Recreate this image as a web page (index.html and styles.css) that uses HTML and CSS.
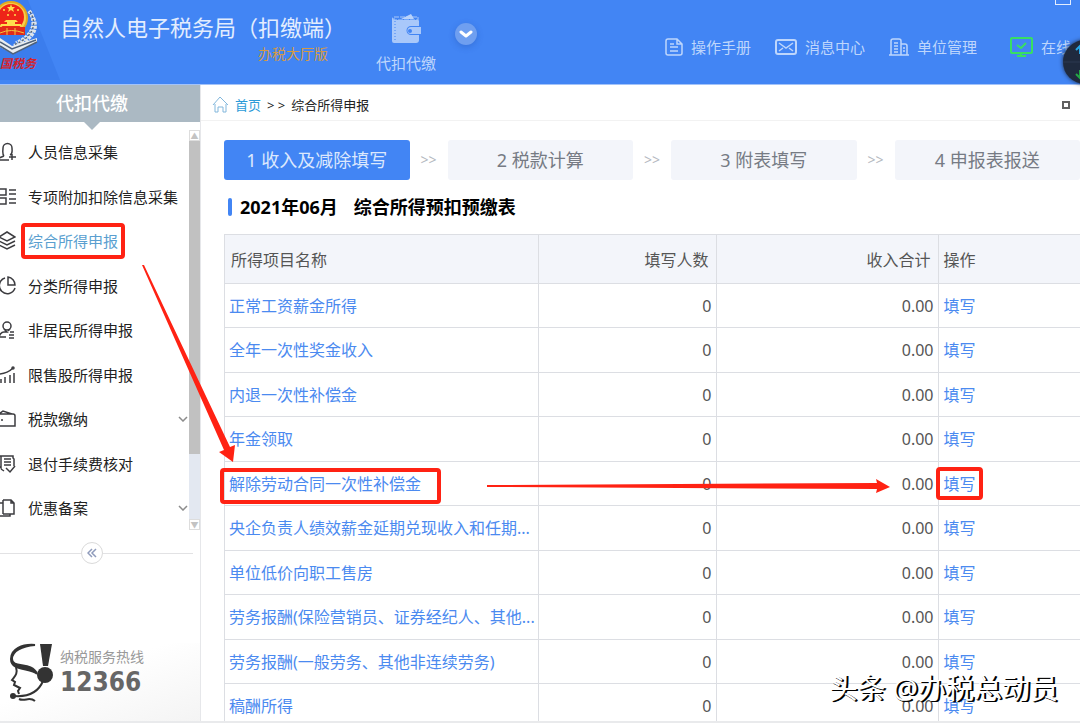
FILE: index.html
```html
<!DOCTYPE html>
<html lang="zh-CN">
<head>
    <meta charset="UTF-8">
    <meta name="viewport" content="width=device-width, initial-scale=1.0">
    <title>自然人电子税务局（扣缴端）</title>
    <link rel="stylesheet" href="styles.css">
</head>
<body>
    <header class="topbar">
        <svg class="emblem" viewBox="0 0 60 84" aria-hidden="true">
            <path d="M0 0H28L60 80H0Z" fill="#3b7ded"/>
            <g fill="none" stroke="#dfe5ea" stroke-width="4" stroke-dasharray="3 1">
                <path d="M29 11C37 20 35 36 16 43"/>
                <path d="M33 18C38 28 34 39 14 46"/>
            </g>
            <path d="M30 12C38 24 33 38 13 45" fill="none" stroke="#53657a" stroke-width="1.5" stroke-dasharray="2 2"/>
            <path d="M0 38L12 46L37 38L37 42L13 54L0 47Z" fill="#e9edf0"/>
            <path d="M0 42L12 49L36 40M0 46L13 54L37 42" fill="none" stroke="#50627a" stroke-width="1.5"/>
            <circle cx="11" cy="18" r="17" fill="#e3a91f"/>
            <circle cx="11" cy="18" r="15" fill="#f7cf4a"/>
            <circle cx="11" cy="17" r="13" fill="#ee2418"/>
            <path d="M11 4l1 3h3l-2 2 1 3-3-2-3 2 1-3-2-2h3z" fill="#ffdf4d"/>
            <g fill="#ffdf4d">
                <circle cx="4" cy="10" r="1"/><circle cx="18" cy="10" r="1"/>
                <circle cx="8" cy="15" r="1"/><circle cx="15" cy="15" r="1"/>
                <path d="M6 20h10l2 2H4zM7 22h8v2H7zM1 24h20v2H1z"/>
            </g>
            <path d="M0 27H25V35H0Z" fill="#e02a1a"/>
            <path d="M0 33Q11 28 24 33M7 28v7M15 28v7" fill="none" stroke="#f3c63a" stroke-width="1"/>
            <text class="emblem-text" x="0" y="68">国税务</text>
        </svg>
        <div class="brand">
            <h1>自然人电子税务局（扣缴端）</h1>
            <span class="edition">办税大厅版</span>
        </div>
        <a class="module" href="#">
            <svg width="30" height="30" viewBox="0 0 30 30" aria-hidden="true">
                <path d="M3 3H27V6H3Z" fill="none" stroke="#a9c8fa" stroke-dasharray="5 1"/>
                <path d="M10 5L20 0L23 5Z" fill="#b9d3fb"/>
                <path d="M1 3L3 6H27a1 1 0 0 1 1 1V12H20a4 4 0 0 0 0 9H28V26a3 3 0 0 1-3 3H3a2 2 0 0 1-2-2Z" fill="#a9c8fa"/>
                <path d="M4 7V27" stroke="#4285f4" stroke-dasharray="1 2"/>
                <path d="M20 13H30V20H20a3 3 0 0 1 0-7Z" fill="#a9c8fa"/>
                <circle cx="19" cy="17" r="2" fill="#4285f4"/>
            </svg>
            <span>代扣代缴</span>
        </a>
        <button class="expand" type="button" aria-label="展开">
            <svg width="14" height="9" viewBox="0 0 14 9"><path d="M2 2L7 6L12 2" fill="none" stroke="#fff" stroke-width="3" stroke-linecap="round" stroke-linejoin="round"/></svg>
        </button>
        <nav class="topnav">
            <a href="#">
                <svg width="18" height="18" viewBox="0 0 18 18"><path d="M3 1H12L17 6V15a2 2 0 0 1-2 2H3a2 2 0 0 1-2-2V3a2 2 0 0 1 2-2ZM12 1V6H17M5 6H9M5 9H13M5 13H13"/></svg>
                操作手册
            </a>
            <a href="#">
                <svg width="22" height="16" viewBox="0 0 22 16"><rect x="1" y="1" width="20" height="14" rx="2"/><path d="M4 4L11 9L18 4M4 12L8 9M18 12L14 9"/></svg>
                消息中心
            </a>
            <a href="#">
                <svg width="20" height="18" viewBox="0 0 20 18"><path d="M0 17H20M2 17V3a2 2 0 0 1 2-2H10a2 2 0 0 1 2 2V17M12 6H16a2 2 0 0 1 2 2V17M5 5H9M5 8H9M5 11H9M5 14H9M14 10H16M14 13H16"/></svg>
                单位管理
            </a>
            <a class="online" href="#">
                <svg width="23" height="20" viewBox="0 0 23 20"><rect x="1" y="1" width="21" height="15" rx="1"/><path d="M7 8L11 11L16 6M11 16V19M7 19H16"/></svg>
                在线
            </a>
        </nav>
        <button class="maximize" type="button" aria-label="最大化"></button>
        <div class="speed" aria-hidden="true">
            <svg width="44" height="44" viewBox="0 0 44 44">
                <path d="M0 22H44" stroke="#2c3850"/>
                <path d="M17 14V7M13 10L17 6L21 10" fill="none" stroke="#27a8e8" stroke-width="2"/>
                <path d="M17 30V37M13 34L17 38L21 34" fill="none" stroke="#23a845" stroke-width="2"/>
            </svg>
        </div>
    </header>

    <div class="layout">
        <aside class="sidebar">
            <h2 class="sidebar-title">代扣代缴</h2>
            <div class="menu-wrap">
                <ul class="menu">
                    <li><a href="#"><svg viewBox="2 0 16 20"><path d="M6 14C4 12 5 9 5 6a4 4 0 0 1 9 0C14 9 15 12 12 13M6 14L1 16V18H11M11 15H18M14 12V18"/></svg>人员信息采集</a></li>
                    <li><a href="#"><svg viewBox="2 0 16 20"><path d="M0 2H8V8H0ZM0 11H8V17H0ZM11 3H18M11 7H18M11 12H18M11 16H18"/></svg>专项附加扣除信息采集</a></li>
                    <li><a class="active" href="#"><svg viewBox="2 0 16 20"><path d="M9 1L17 6L9 10L1 6ZM1 10L9 14L17 10M1 14L9 18L17 14"/></svg>综合所得申报</a></li>
                    <li><a href="#"><svg viewBox="2 0 16 20"><path d="M7 2A8 8 0 1 0 17 12M10 1A8 8 0 0 1 17 9H10Z"/></svg>分类所得申报</a></li>
                    <li><a href="#"><svg viewBox="2 0 16 20"><circle cx="9" cy="6" r="4"/><path d="M6 9L9 12H6C3 12 2 14 1 17H8M12 9L10 11M12 12H16M11 15H16M11 18H16"/></svg>非居民所得申报</a></li>
                    <li><a href="#"><svg viewBox="2 0 16 20"><path d="M0 9C7 9 11 7 15 3M3 18V14M7 18V12M12 18V10M16 18V8"/><circle cx="15" cy="3" r="1"/></svg>限售股所得申报</a></li>
                    <li><a href="#"><svg viewBox="2 0 16 20"><path d="M0 5H15a2 2 0 0 1 2 2V17H0M1 5L5 2L14 5M3 11H5"/></svg>税款缴纳<svg class="caret" viewBox="0 0 10 6"><path d="M1 1L5 5L9 1"/></svg></a></li>
                    <li><a href="#"><svg viewBox="2 0 16 20"><path d="M1 2H15V4L16 5V12M3 2V14L1 12M3 15L6 17M6 5H13M6 8H13M6 11H13M8 14L12 18L17 12"/></svg>退付手续费核对</a></li>
                    <li><a href="#"><svg viewBox="2 0 16 20"><path d="M5 2H13L16 5V16H5M13 2V5H16M5 2V16M5 5H1V18H12V16"/></svg>优惠备案<svg class="caret" viewBox="0 0 10 6"><path d="M1 1L5 5L9 1"/></svg></a></li>
                </ul>
                <div class="scrollbar" aria-hidden="true">
                    <span class="scroll-end">▲</span>
                    <span class="scroll-thumb"></span>
                    <span class="scroll-end">▼</span>
                </div>
            </div>
            <div class="collapse">
                <button type="button" aria-label="收起">
                    <svg width="10" height="10" viewBox="0 0 10 10"><path d="M5 1L1 5L5 9M9 1L5 5L9 9"/></svg>
                </button>
            </div>
            <div class="hotline">
                <svg width="44" height="60" viewBox="0 0 44 60" aria-hidden="true">
                    <path d="M25 2C12 3 2 8 2 16C2 26 22 18 27 31C22 24 1 29 1 16C1 6 12 1 25 2Z" fill="#333" stroke="#333" stroke-width="2"/>
                    <path d="M30 1H42L38 23H33Z" fill="#333"/>
                    <circle cx="35" cy="32" r="8" fill="#333"/>
                    <path d="M33 38C28 50 17 54 4 53" fill="none" stroke="#333" stroke-width="2"/>
                    <circle cx="3" cy="53" r="3" fill="#333"/>
                    <path d="M6 24C8 31 5 33 2 37L5 39L4 42L8 44L10 45L8 48L9 51M9 56C15 59 19 53 25 58" fill="none" stroke="#333" stroke-width="2"/>
                </svg>
                <p>
                    <span class="hotline-label">纳税服务热线</span>
                    <strong>12366</strong>
                </p>
            </div>
        </aside>

        <main class="content">
            <div class="breadcrumb">
                <svg width="17" height="18" viewBox="0 0 17 18" aria-hidden="true"><path d="M1 9L8 1L16 9M3 8V16H6V11H11V16H14V8"/></svg>
                <a href="#">首页</a>
                <span>&gt; &gt;</span>
                <span>综合所得申报</span>
                <button type="button" aria-label="还原"></button>
            </div>

            <ol class="steps">
                <li class="step current">1 收入及减除填写</li>
                <li class="arrow" aria-hidden="true">&gt;&gt;</li>
                <li class="step">2 税款计算</li>
                <li class="arrow" aria-hidden="true">&gt;&gt;</li>
                <li class="step">3 附表填写</li>
                <li class="arrow" aria-hidden="true">&gt;&gt;</li>
                <li class="step">4 申报表报送</li>
            </ol>

            <h3 class="report-title"><span>2021年06月</span><span>综合所得预扣预缴表</span></h3>

            <table class="income">
                <colgroup>
                    <col>
                    <col class="col-count">
                    <col class="col-total">
                    <col class="col-action">
                </colgroup>
                <thead>
                    <tr><th>所得项目名称</th><th class="num">填写人数</th><th class="num">收入合计</th><th>操作</th></tr>
                </thead>
                <tbody>
                    <tr><td><a href="#">正常工资薪金所得</a></td><td class="num">0</td><td class="num">0.00</td><td><a href="#">填写</a></td></tr>
                    <tr><td><a href="#">全年一次性奖金收入</a></td><td class="num">0</td><td class="num">0.00</td><td><a href="#">填写</a></td></tr>
                    <tr><td><a href="#">内退一次性补偿金</a></td><td class="num">0</td><td class="num">0.00</td><td><a href="#">填写</a></td></tr>
                    <tr><td><a href="#">年金领取</a></td><td class="num">0</td><td class="num">0.00</td><td><a href="#">填写</a></td></tr>
                    <tr><td><a href="#">解除劳动合同一次性补偿金</a></td><td class="num">0</td><td class="num">0.00</td><td><a href="#">填写</a></td></tr>
                    <tr><td><a href="#">央企负责人绩效薪金延期兑现收入和任期...</a></td><td class="num">0</td><td class="num">0.00</td><td><a href="#">填写</a></td></tr>
                    <tr><td><a href="#">单位低价向职工售房</a></td><td class="num">0</td><td class="num">0.00</td><td><a href="#">填写</a></td></tr>
                    <tr><td><a href="#">劳务报酬(保险营销员、证券经纪人、其他...</a></td><td class="num">0</td><td class="num">0.00</td><td><a href="#">填写</a></td></tr>
                    <tr><td><a href="#">劳务报酬(一般劳务、其他非连续劳务)</a></td><td class="num">0</td><td class="num">0.00</td><td><a href="#">填写</a></td></tr>
                    <tr><td><a href="#">稿酬所得</a></td><td class="num">0</td><td class="num">0.00</td><td><a href="#">填写</a></td></tr>
                </tbody>
            </table>
        </main>
    </div>

    <!-- guide marks drawn over the page -->
    <svg class="marks" width="1080" height="723" viewBox="0 0 1080 723" aria-hidden="true">
        <g fill="none" stroke="#ff2213" stroke-width="4">
            <rect x="23" y="225" width="100" height="32" rx="2"/>
            <rect x="222" y="470" width="217" height="32" rx="2"/>
            <rect x="938" y="469" width="43" height="29" rx="2"/>
        </g>
        <g fill="#ff2213">
            <path d="M142 265L144 265L230 447L235 445L233 462L219 452L224 450Z"/>
            <path d="M487 485L877 483L876 479L890 487L876 493L877 489L487 487Z"/>
        </g>
    </svg>
    <div class="watermark">头条 @办税总动员</div>
</body>
</html>
```
FILE: styles.css
```css
:root {
    --primary: #4285f4;
    --link: #4b8af0;
    --border: #dcdee3;
    --panel: #f3f5fa;
    --text: #222222;
}

* {
    margin: 0;
    padding: 0;
    box-sizing: border-box;
}

body {
    position: relative;
    display: flex;
    flex-direction: column;
    height: 100vh;
    overflow: hidden;
    background: #ffffff;
    color: var(--text);
    font-family: "Noto Sans", "Noto Sans CJK SC", sans-serif;
    font-size: 15px;
    line-height: 20px;
}

a {
    color: inherit;
    text-decoration: none;
}

button {
    border: none;
    background: none;
    cursor: pointer;
}

ul, ol {
    list-style: none;
}

svg {
    flex: none;
}

/* top bar */
.topbar {
    position: relative;
    display: flex;
    flex: none;
    height: 85px;
    background: var(--primary);
    border-bottom: 1px solid #a3c3f9;
    color: #bed6fc;
}

.emblem {
    width: 60px;
    height: 84px;
}

.emblem-text {
    fill: #d5232b;
    font-size: 12px;
    font-style: italic;
    font-weight: 700;
}

.brand {
    display: flex;
    flex-direction: column;
    padding-top: 13px;
}

.brand h1 {
    color: #e3edfe;
    font-size: 22px;
    font-weight: 400;
    line-height: 28px;
}

.edition {
    align-self: flex-end;
    margin-right: 18px;
    color: #d59a45;
    font-size: 14px;
    line-height: 26px;
}

.module {
    display: flex;
    flex-direction: column;
    align-items: center;
    gap: 9px;
    padding-top: 14px;
    margin-left: 30px;
}

.expand {
    display: grid;
    place-items: center;
    width: 22px;
    height: 22px;
    margin: 23px 0 0 19px;
    border-radius: 50%;
    background: #6f9ff0;
    box-shadow: 0 2px 6px rgba(30, 70, 160, 0.3);
}

.topnav {
    display: flex;
    align-items: center;
    gap: 24px;
    height: 40px;
    margin: 27px 9px 0 auto;
}

.topnav a {
    display: flex;
    align-items: center;
    gap: 8px;
}

.topnav svg {
    fill: none;
    stroke: #bed6fc;
    stroke-width: 2;
}

.topnav path {
    stroke-width: 1.5;
}

.topnav .online {
    margin-left: 9px;
}

.topnav .online svg,
.topnav .online path {
    stroke: #38df62;
    stroke-width: 2;
}

.maximize {
    position: absolute;
    top: -10px;
    right: 9px;
    width: 16px;
    height: 15px;
    border: 1px solid #e3edfe;
}

.speed {
    position: absolute;
    top: 40px;
    right: -27px;
    width: 44px;
    height: 44px;
    border-radius: 50%;
    background: #1f2a3e;
    box-shadow: 0 0 4px #1f2a3e;
}

/* page body */
.layout {
    display: flex;
    flex: 1;
    min-height: 0;
    border-bottom: 2px solid #e9eaec;
}

.sidebar {
    display: flex;
    flex-direction: column;
    flex: none;
    width: 201px;
    border-right: 1px solid #e6e7ea;
}

.sidebar-title {
    position: relative;
    padding-right: 16px;
    background: #abb9c3;
    color: #ffffff;
    font-size: 18px;
    font-weight: 500;
    line-height: 37px;
    text-align: center;
}

.sidebar-title::after {
    content: '';
    position: absolute;
    top: 100%;
    left: 84px;
    border: 8px solid transparent;
    border-top-color: #abb9c3;
}

.menu-wrap {
    display: flex;
    margin-top: 8px;
}

.menu {
    flex: 1;
}

.menu a {
    display: flex;
    align-items: center;
    height: 44px;
    gap: 12px;
}

.menu li:nth-child(even) a {
    height: 45px;
}

.menu svg {
    width: 16px;
    height: 20px;
    fill: none;
    stroke: #3c3c40;
    stroke-width: 1.5;
}

.menu .active {
    color: #5a9fd0;
}

.menu .caret {
    width: 10px;
    height: 6px;
    margin: 0 1px 0 auto;
    stroke: #8c8c8c;
}

.scrollbar {
    display: flex;
    flex-direction: column;
    width: 11px;
    background: #e3e8f1;
}

.scroll-end {
    height: 11px;
    border: 1px solid #dddddd;
    background: #ffffff;
    color: #c3c3c3;
    font-size: 8px;
    line-height: 9px;
    text-align: center;
}

.scroll-thumb {
    height: 313px;
    margin-bottom: auto;
    background: #c1c1c1;
}

.collapse {
    display: flex;
    align-items: center;
    margin-top: 12px;
}

.collapse::before,
.collapse::after {
    content: '';
    width: 81px;
    height: 1px;
    background: #e2e2e4;
}

.collapse::after {
    width: 90px;
}

.collapse button {
    display: grid;
    place-items: center;
    width: 22px;
    height: 22px;
    border: 1px solid #dadada;
    border-radius: 50%;
}

.collapse path {
    fill: none;
    stroke: #8f9bbb;
    stroke-width: 1.5;
}

.hotline {
    display: flex;
    gap: 6px;
    height: 78px;
    margin-top: auto;
    padding: 0 0 0 10px;
    background: linear-gradient(160deg, #ffffff 40%, #f4f4f4);
}

.hotline p {
    display: flex;
    flex-direction: column;
    padding-top: 4px;
}

.hotline-label {
    color: #999999;
    font-size: 14px;
    line-height: 20px;
}

.hotline strong {
    color: #666666;
    font-family: "DejaVu Sans Condensed", "DejaVu Sans", sans-serif;
    font-size: 26px;
    line-height: 30px;
}

.content {
    flex: 1;
    min-width: 0;
    overflow: hidden;
}

.breadcrumb {
    display: flex;
    align-items: center;
    gap: 6px;
    height: 36px;
    padding: 4px 10px 0 11px;
    border-bottom: 1px solid #f2f2f2;
    font-size: 13px;
}

.breadcrumb svg {
    fill: none;
    stroke: #82b7dc;
}

.breadcrumb a {
    color: #2b9bd8;
}

.breadcrumb button {
    width: 8px;
    height: 8px;
    margin-left: auto;
    border: 2px solid #606060;
}

.steps {
    display: flex;
    padding: 19px 0 0 23px;
    line-height: 40px;
    text-align: center;
}

.step {
    flex: 1;
    border-radius: 3px;
    background: var(--panel);
    color: #767b84;
    font-size: 18px;
}

.step.current {
    background: var(--primary);
    color: #dce8fd;
}

.arrow {
    width: 38px;
    color: #b4b8c0;
    font-size: 14px;
}

.report-title {
    display: flex;
    align-items: center;
    gap: 16px;
    height: 54px;
    padding-left: 27px;
    color: #000000;
    font-size: 18px;
}

.report-title::before {
    content: '';
    width: 4px;
    height: 18px;
    margin-right: -8px;
    border-radius: 2px;
    background: var(--primary);
}

/* income table */
.income {
    width: calc(100% - 23px);
    margin-left: 23px;
    border-collapse: collapse;
    table-layout: fixed;
    color: #555555;
    font-size: 16px;
}

.col-count {
    width: 178px;
}

.col-total {
    width: 222px;
}

.col-action {
    width: 142px;
}

.income th,
.income td {
    height: 44px;
    padding: 0 4px;
    border: 1px solid var(--border);
    font-weight: 400;
    text-align: left;
    white-space: nowrap;
}

.income tr > :last-child {
    padding-left: 5px;
    border-right: none;
}

.income th {
    height: 49px;
    padding: 2px 7px 0 6px;
    background: var(--panel);
}

.income tbody tr:nth-child(even) td {
    height: 45px;
}

.income .num {
    text-align: right;
}

.income a {
    color: var(--link);
}

/* overlays */
.marks {
    position: absolute;
    top: 0;
    left: 0;
    pointer-events: none;
}

.watermark {
    position: absolute;
    right: 22px;
    bottom: 16px;
    color: #ffffff;
    font-size: 28px;
    line-height: 38px;
    text-shadow: 2px 1px 0 #000000, 1px 1px 0 #000000;
}
```
